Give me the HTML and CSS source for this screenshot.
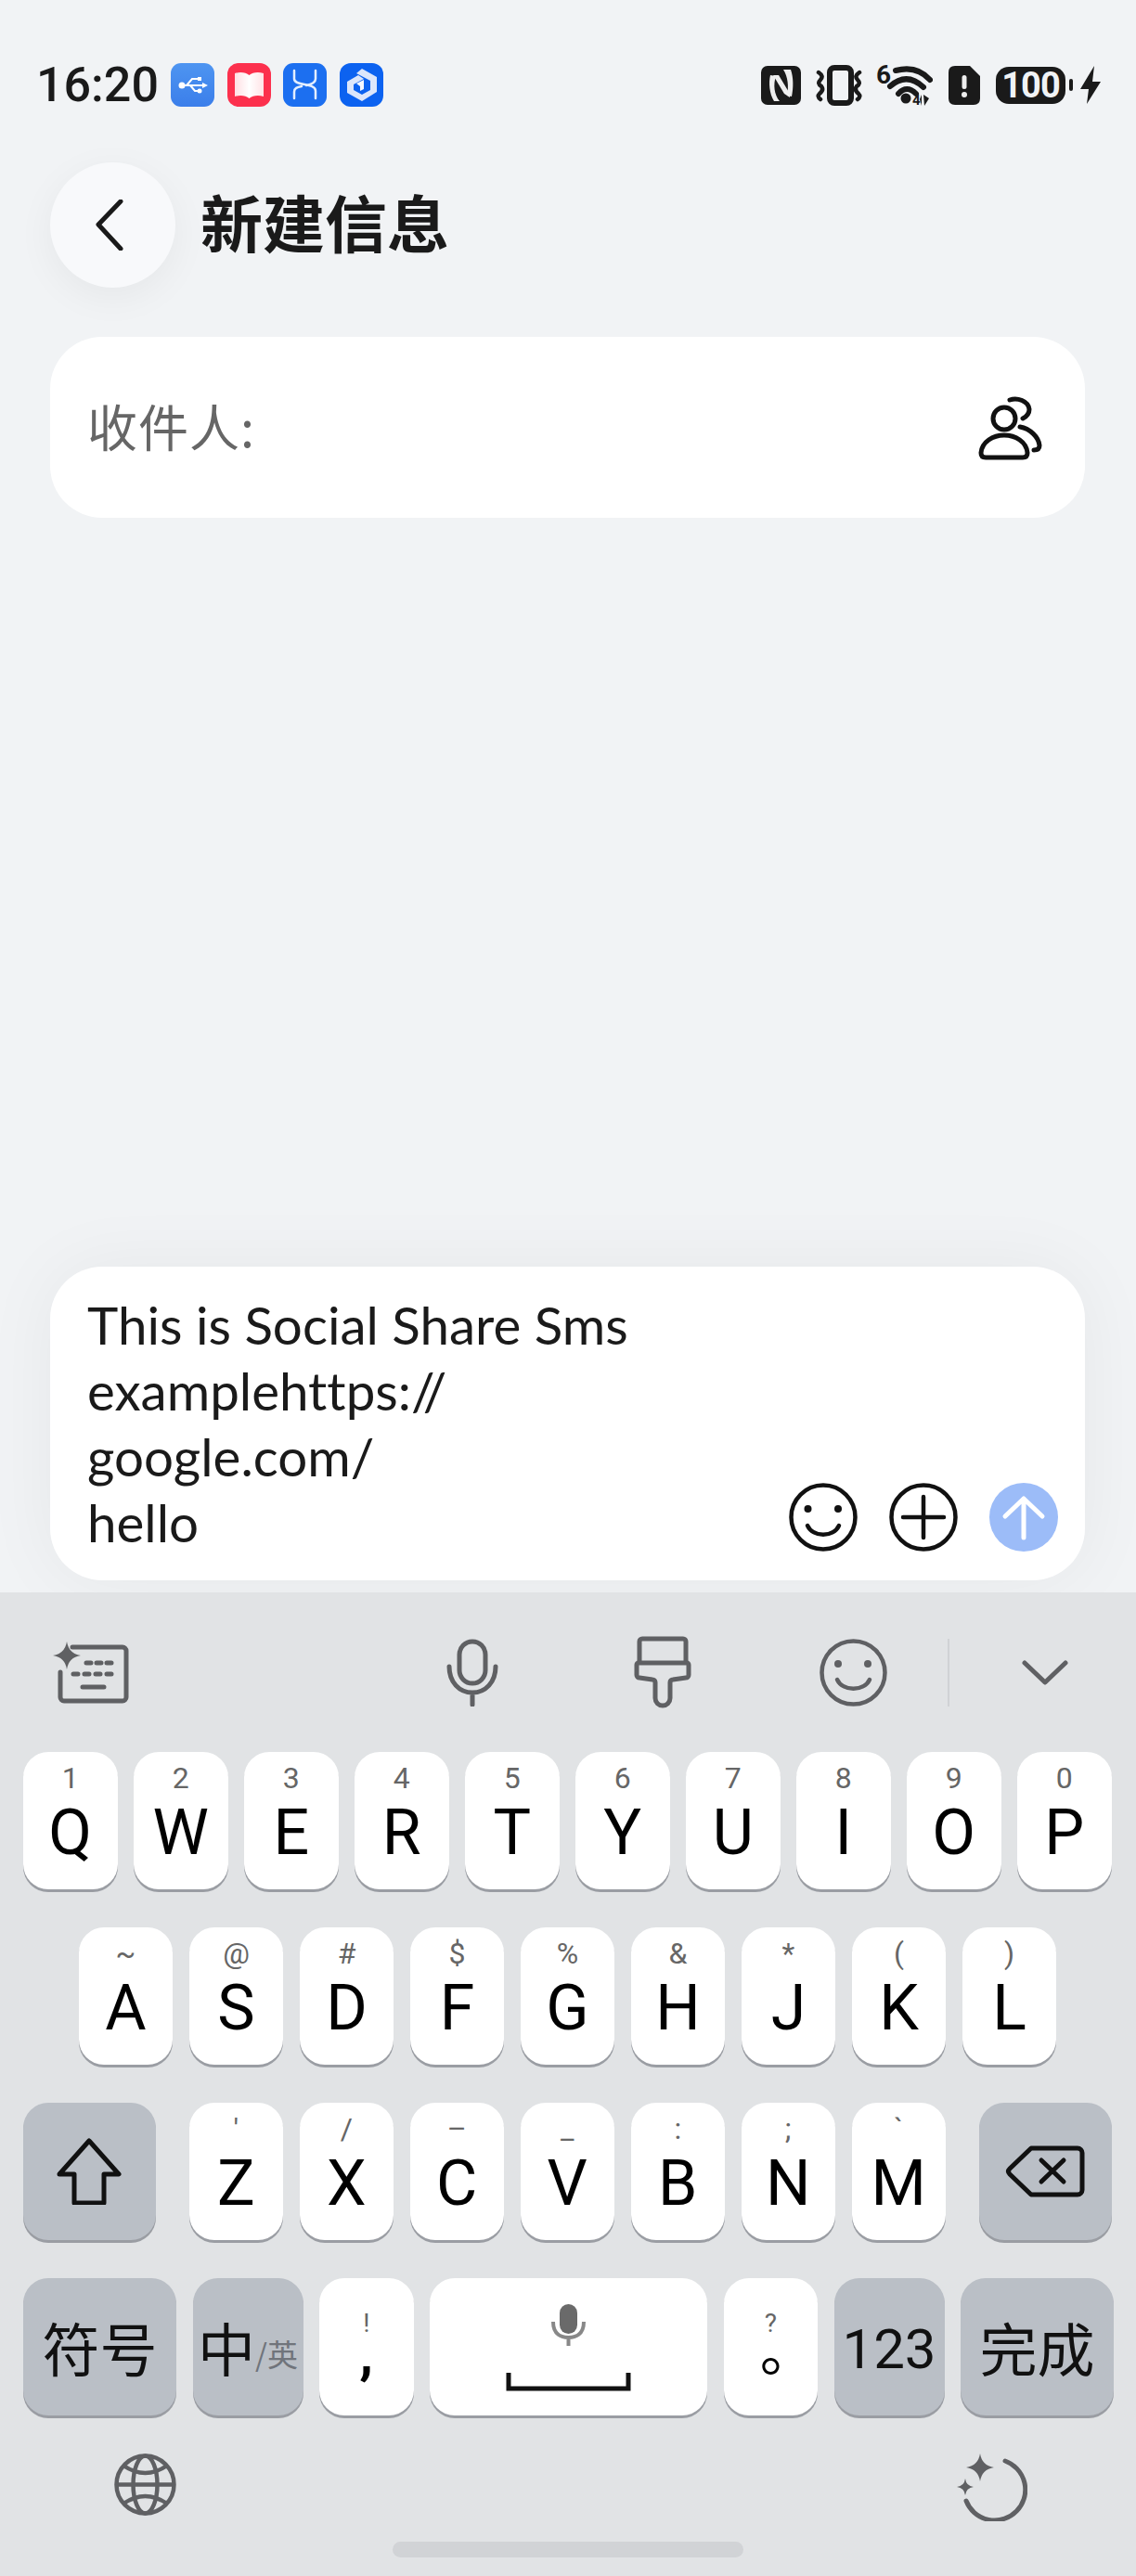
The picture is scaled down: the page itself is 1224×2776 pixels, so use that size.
FILE: index.html
```html
<!DOCTYPE html>
<html lang="zh-CN">
<head>
    <meta charset="UTF-8">
    <meta name="viewport" content="width=device-width, initial-scale=1.0">
    <title>新建信息</title>
    <link rel="stylesheet" href="styles.css">
</head>
<body>
<div class="phone">
    <div class="status-bar">
        <span class="time">16:20</span>
        <div class="app-icons">
            <svg class="app-icon" width="47" height="47" viewBox="0 0 47 47">
                <defs><linearGradient id="usb" x1="0" y1="0" x2="0" y2="1"><stop offset="0" stop-color="#4e95f1"/><stop offset="1" stop-color="#3b7eea"/></linearGradient></defs>
                <rect width="47" height="47" rx="11" fill="url(#usb)"/>
                <path d="M12 24H36M17 24L23 17H29M21 24L26 30H31" fill="none" stroke="#fff" stroke-width="2"/>
                <circle cx="12" cy="24" r="3.5" fill="#fff"/><rect x="29" y="15" width="4" height="4" fill="#fff"/><circle cx="31" cy="30" r="2.5" fill="#fff"/><path d="M34 21L40 24L34 27Z" fill="#fff"/>
            </svg>
            <svg class="app-icon" width="47" height="47" viewBox="0 0 47 47">
                <defs><linearGradient id="page" x1="0" y1="0" x2="1" y2="0"><stop offset="0" stop-color="#ffdfe3"/><stop offset=".5" stop-color="#fff"/><stop offset="1" stop-color="#ffe3e6"/></linearGradient></defs>
                <rect width="47" height="47" rx="12" fill="#fc304d"/>
                <path d="M8 11C14 9 20 10 23.500 13C27 10 33 9 39 11V36C33 34 27 35 23.500 38C20 35 14 34 8 36Z" fill="url(#page)"/>
            </svg>
            <svg class="app-icon" width="47" height="47" viewBox="0 0 47 47">
                <rect width="47" height="47" rx="11" fill="#1c6ff0"/>
                <path d="M12 8V17C12 25 35 21 35 30V38M35 8V17C35 21 30 23 25 24M20 25C15 26 12 27 12 31V38" fill="none" stroke="#e3eeff" stroke-width="2.500" stroke-linecap="round"/>
            </svg>
            <svg class="app-icon" width="47" height="47" viewBox="0 0 47 47">
                <rect width="47" height="47" rx="12" fill="#0c62f0"/>
                <path d="M24 6L40 15V31L24 41L8 32V20L20 13L26 17L15 23V29L24 34L33 29V19L18 11Z" fill="#dce6fb"/>
                <path d="M18 22L26 18V28L22 30V25Z" fill="#f4f7ff"/>
            </svg>
        </div>
        <div class="sys-icons">
            <svg class="nfc" width="43" height="42" viewBox="0 0 43 42">
                <rect width="43" height="42" rx="7" fill="#1a1a1a"/>
                <path d="M10 10L16 11C13 20 14 31 20 38L14 38C9 30 8 18 10 10Z" fill="#eee"/>
                <path d="M24 4L32 4C35 12 35 24 33 33L28 32C30 22 29 12 24 4Z" fill="#eee"/>
                <path d="M13 10L19 10L31 30L31 34L25 30Z" fill="#eee"/>
            </svg>
            <svg class="vibrate" width="50" height="44" viewBox="0 0 50 44">
                <rect x="15" y="3" width="23" height="38" rx="5" fill="none" stroke="#1a1a1a" stroke-width="6"/>
                <path d="M3 8Q9 12 5 16Q1 20 6 23Q9 27 4 31Q1 34 5 37M47 8Q41 12 45 16Q49 20 44 23Q41 27 46 31Q49 34 45 37" fill="none" stroke="#1a1a1a" stroke-width="4.500" stroke-linecap="round"/>
            </svg>
            <svg class="wifi" width="61" height="57" viewBox="0 -6 61 57">
                <text class="wifi-six" x="0" y="21">6</text>
                <path d="M21 7Q44 1 58 17M15 24Q33 8 51 25M24 32Q33 22 43 32" fill="none" stroke="#1a1a1a" stroke-width="6" stroke-linecap="round"/>
                <circle cx="32" cy="37" r="5.500" fill="#1a1a1a"/>
                <text class="wifi-four" x="39" y="44">4</text>
                <path d="M49 33V45L47 38ZM51 33L57 37L52 45Z" fill="#1a1a1a"/>
            </svg>
            <svg class="sim" width="34" height="42" viewBox="0 0 34 42">
                <path d="M7 0H23L34 11V35Q34 42 27 42H7Q0 42 0 35V7Q0 0 7 0Z" fill="#1a1a1a"/>
                <rect x="14.500" y="10" width="5" height="15" rx="2.500" fill="#eee"/>
                <circle cx="17" cy="31" r="3" fill="#eee"/>
            </svg>
            <div class="battery"><span class="battery-body">100</span><span class="battery-nub"></span></div>
            <svg class="bolt" width="22" height="41" viewBox="0 0 22 41">
                <path d="M15 0L13 17H22L7 41L9 25H0Z" fill="#1a1a1a"/>
            </svg>
        </div>
    </div>

    <div class="header">
        <div class="back-btn">
            <svg class="back-icon" width="30" height="55" viewBox="0 0 30 55"><path d="M27 2L3 27L27 53" fill="none" stroke="#1a1a1a" stroke-width="5" stroke-linecap="round" stroke-linejoin="round"/></svg>
        </div>
        <h1 class="title">新建信息</h1>
    </div>

    <div class="recipient">
        <span class="recipient-label">收件人:</span>
        <svg width="100" height="90" viewBox="0 0 100 90">
            <circle cx="42" cy="35" r="12" fill="none" stroke="#111" stroke-width="5"/>
            <path d="M17 72C18 60 30 53 42 53C54 53 66 60 67 72Q67 77 62 77H22Q17 77 17 72Z" fill="none" stroke="#111" stroke-width="5"/>
            <path d="M48 15C56 12 68 16 69 25C69 30 66 33 62 35M59 44C70 46 79 55 80 64C80 67 78 69 74 69" fill="none" stroke="#111" stroke-width="5" stroke-linecap="round"/>
        </svg>
    </div>

    <div class="composer">
        <div class="composer-text">This is Social Share Sms<br>examplehttps://<br>google.com/<br>hello</div>
        <div class="composer-btns">
            <svg width="74" height="74" viewBox="0 0 74 74">
                <circle cx="37" cy="37" r="34.500" fill="none" stroke="#111" stroke-width="4.500"/>
                <circle cx="20.500" cy="28" r="4" fill="#111"/><circle cx="53" cy="28" r="4" fill="#111"/>
                <path d="M20 46C26 59 48 59 54 46" fill="none" stroke="#111" stroke-width="4.500" stroke-linecap="round"/>
            </svg>
            <svg width="74" height="74" viewBox="0 0 74 74">
                <circle cx="37" cy="37" r="34.500" fill="none" stroke="#111" stroke-width="4.500"/>
                <path d="M15 37H59M37 15V59" fill="none" stroke="#111" stroke-width="4.500" stroke-linecap="round"/>
            </svg>
            <svg width="74" height="74" viewBox="0 0 74 74">
                <circle cx="37" cy="37" r="37" fill="#9cbcf8"/>
                <path d="M37 59V17M17 36L37 17L57 36" fill="none" stroke="#fff" stroke-width="5" stroke-linecap="round" stroke-linejoin="round"/>
            </svg>
        </div>
    </div>

    <div class="keyboard">
        <div class="toolbar">
            <svg class="tb-kbd" width="82" height="67" viewBox="0 0 82 67">
                <path d="M21 6H75A4 4 0 0 1 79 10V60A4 4 0 0 1 75 64H12A4 4 0 0 1 8 60V33" fill="none" stroke="#5f6063" stroke-width="5" stroke-linecap="round"/>
                <path d="M15 0Q17 13 30 15Q17 17 15 30Q13 17 0 15Q13 13 15 0Z" fill="#5f6063"/>
                <path d="M36 23H41M47 23H52M58 23H63M22 35H27M34 35H39M46 35H51M58 35H63M32 49H55" fill="none" stroke="#5f6063" stroke-width="5" stroke-linecap="round"/>
            </svg>
            <svg class="tb-mic" width="56" height="73" viewBox="0 0 56 73">
                <rect x="14" y="3" width="28" height="45" rx="14" fill="none" stroke="#5f6063" stroke-width="5"/>
                <path d="M3 30C3 47 14 58 28 58C42 58 53 47 53 30M28 58V71" fill="none" stroke="#5f6063" stroke-width="5" stroke-linecap="round"/>
            </svg>
            <svg class="tb-brush" width="62" height="78" viewBox="0 0 62 78">
                <path d="M6 29V6A3 3 0 0 1 9 3H53A3 3 0 0 1 56 6V29" fill="none" stroke="#5f6063" stroke-width="5"/>
                <path d="M5 29H57A2 2 0 0 1 59 31V42A3 3 0 0 1 56 45L42 47A3 3 0 0 0 39 50V67A8 8 0 0 1 23 67V50A3 3 0 0 0 20 47L6 45A3 3 0 0 1 3 42V31A2 2 0 0 1 5 29Z" fill="none" stroke="#5f6063" stroke-width="5" stroke-linejoin="round"/>
            </svg>
            <svg class="tb-smile" width="73" height="73" viewBox="0 0 73 73">
                <circle cx="36.500" cy="36.500" r="34" fill="none" stroke="#5f6063" stroke-width="4.500"/>
                <circle cx="20" cy="27" r="4" fill="#5f6063"/><circle cx="52" cy="27" r="4" fill="#5f6063"/>
                <path d="M19 44C25 57 48 57 54 44" fill="none" stroke="#5f6063" stroke-width="4.500" stroke-linecap="round"/>
            </svg>
            <span class="tb-divider"></span>
            <svg class="tb-chevron" width="50" height="27" viewBox="0 0 50 27">
                <path d="M3 3L25 24L47 3" fill="none" stroke="#5f6063" stroke-width="5" stroke-linecap="round" stroke-linejoin="round"/>
            </svg>
        </div>

        <div class="key-row">
            <div class="key"><span class="hint">1</span><span class="letter">Q</span></div>
            <div class="key"><span class="hint">2</span><span class="letter">W</span></div>
            <div class="key"><span class="hint">3</span><span class="letter">E</span></div>
            <div class="key"><span class="hint">4</span><span class="letter">R</span></div>
            <div class="key"><span class="hint">5</span><span class="letter">T</span></div>
            <div class="key"><span class="hint">6</span><span class="letter">Y</span></div>
            <div class="key"><span class="hint">7</span><span class="letter">U</span></div>
            <div class="key"><span class="hint">8</span><span class="letter">I</span></div>
            <div class="key"><span class="hint">9</span><span class="letter">O</span></div>
            <div class="key"><span class="hint">0</span><span class="letter">P</span></div>
        </div>
        <div class="key-row row-center">
            <div class="key"><span class="hint">~</span><span class="letter">A</span></div>
            <div class="key"><span class="hint">@</span><span class="letter">S</span></div>
            <div class="key"><span class="hint">#</span><span class="letter">D</span></div>
            <div class="key"><span class="hint">$</span><span class="letter">F</span></div>
            <div class="key"><span class="hint">%</span><span class="letter">G</span></div>
            <div class="key"><span class="hint">&amp;</span><span class="letter">H</span></div>
            <div class="key"><span class="hint">*</span><span class="letter">J</span></div>
            <div class="key"><span class="hint">(</span><span class="letter">K</span></div>
            <div class="key"><span class="hint">)</span><span class="letter">L</span></div>
        </div>
        <div class="key-row">
            <div class="key key-fn key-shift">
                <svg width="70" height="72" viewBox="0 0 70 72"><path d="M35 3L67 39H51V70H19V39H3Z" fill="none" stroke="#111" stroke-width="5" stroke-linejoin="round"/></svg>
            </div>
            <div class="key-group">
                <div class="key"><span class="hint">'</span><span class="letter">Z</span></div>
                <div class="key"><span class="hint">/</span><span class="letter">X</span></div>
                <div class="key"><span class="hint">–</span><span class="letter">C</span></div>
                <div class="key"><span class="hint">_</span><span class="letter">V</span></div>
                <div class="key"><span class="hint">:</span><span class="letter">B</span></div>
                <div class="key"><span class="hint">;</span><span class="letter">N</span></div>
                <div class="key"><span class="hint">`</span><span class="letter">M</span></div>
            </div>
            <div class="key key-fn key-shift">
                <svg width="86" height="56" viewBox="0 0 86 56">
                    <path d="M28 3H78A5 5 0 0 1 83 8V48A5 5 0 0 1 78 53H28L5 31Q2 28 5 25Z" fill="none" stroke="#111" stroke-width="5" stroke-linejoin="round"/>
                    <path d="M39 16L63 39M63 16L39 39" fill="none" stroke="#111" stroke-width="5" stroke-linecap="round"/>
                </svg>
            </div>
        </div>
        <div class="key-row">
            <div class="key key-fn key-sym"><span class="fn-label">符号</span></div>
            <div class="key key-fn key-lang"><span class="fn-label">中</span><span class="lang-alt">/英</span></div>
            <div class="key"><span class="hint hint-punct">!</span><span class="letter letter-punct">,</span></div>
            <div class="key key-space">
                <svg width="135" height="95" viewBox="0 0 135 95">
                    <rect x="58" y="1" width="19" height="32" rx="9.500" fill="#6a6a6a"/>
                    <path d="M51 20C51 34 60 37 67.500 37C75 37 84 34 84 20M67.500 37V46" fill="none" stroke="#888" stroke-width="4"/>
                    <path d="M3 75V92H132V75" fill="none" stroke="#111" stroke-width="5"/>
                </svg>
            </div>
            <div class="key"><span class="hint hint-punct">?</span><span class="letter letter-circle">。</span></div>
            <div class="key key-fn key-num"><span class="num-label">123</span></div>
            <div class="key key-fn key-done"><span class="fn-label">完成</span></div>
        </div>

        <div class="kb-bottom">
            <svg width="67" height="67" viewBox="0 0 67 67">
                <g fill="none" stroke="#5f6063" stroke-width="4.500">
                    <circle cx="33.500" cy="33.500" r="31"/>
                    <ellipse cx="33.500" cy="33.500" rx="13" ry="31"/>
                    <path d="M2 33.500H65M10 13Q33.500 29 57 13M10 54Q33.500 38 57 54"/>
                </g>
            </svg>
            <svg width="76" height="73" viewBox="0 0 76 73">
                <path d="M52 8A33 33 0 1 1 10 51" fill="none" stroke="#5f6063" stroke-width="5" stroke-linecap="round"/>
                <path d="M25 0Q27 13 40 15Q27 17 25 30Q23 17 10 15Q23 13 25 0Z" fill="#5f6063"/>
                <path d="M9 27Q10 35 18 36Q10 37 9 45Q8 37 0 36Q8 35 9 27Z" fill="#5f6063"/>
            </svg>
        </div>
        <div class="home-bar"></div>
    </div>
</div>
</body>
</html>
```

FILE: styles.css
```css
* {
    box-sizing: border-box;
}
body {
    margin: 0;
    background: #f1f3f5;
    font-family: 'Roboto', 'Noto Sans CJK SC', sans-serif;
    color: #1a1a1a;
}
.phone {
    width: 1224px;
    height: 2776px;
    display: flex;
    flex-direction: column;
    overflow: hidden;
}

/* status bar */
.status-bar {
    display: flex;
    align-items: center;
    height: 47px;
    margin-top: 68px;
    padding: 0 38px 0 39px;
}
.time {
    font-size: 52px;
    font-weight: 500;
    width: 145px;
}
.app-icons {
    display: flex;
    gap: 13.500px;
}
.sys-icons {
    display: flex;
    align-items: center;
    margin-left: auto;
}
.wifi-six {
    font: 700 28px 'Roboto', sans-serif;
    fill: #1a1a1a;
}
.wifi-four {
    font: 700 15px 'Roboto', sans-serif;
    fill: #1a1a1a;
}
.vibrate { margin-left: 16px; }
.wifi { margin: -6px 0 -6px 15px; }
.sim { margin-left: 17px; }
.battery {
    display: flex;
    align-items: center;
    margin-left: 17px;
}
.battery-body {
    width: 75px;
    height: 40px;
    border-radius: 14px;
    background: #1a1a1a;
    color: #f1f3f5;
    font-size: 38px;
    font-weight: 700;
    line-height: 40px;
    letter-spacing: -1px;
    text-align: center;
}
.battery-nub {
    width: 4px;
    height: 13px;
    margin-left: 4px;
    border-radius: 2px;
    background: #1a1a1a;
}
.bolt { margin-left: 8px; }

/* header */
.header {
    display: flex;
    align-items: center;
    gap: 27px;
    margin: 60px 0 0 54px;
    position: relative;
    z-index: 1;
}
.back-btn {
    width: 135px;
    height: 135px;
    border-radius: 50%;
    background: #f8f9fb;
    box-shadow: 0 10px 40px rgba(0, 0, 0, 0.05);
    display: flex;
    align-items: center;
    justify-content: center;
}
.back-icon {
    margin-right: 7px;
}
.title {
    margin: 0 0 10px;
    font-family: 'Noto Sans CJK SC', sans-serif;
    font-size: 67px;
    font-weight: 700;
    line-height: 1;
}

/* recipient */
.recipient {
    height: 195px;
    margin: 53px 55px 0 54px;
    padding: 0 29px 0 40px;
    border-radius: 56px;
    background: #fff;
    display: flex;
    align-items: center;
    justify-content: space-between;
}
.recipient-label {
    margin-bottom: 4px;
    font-family: 'Noto Sans CJK SC', sans-serif;
    font-size: 54px;
    font-weight: 400;
    letter-spacing: 1px;
    color: #666;
}

/* message box */
.composer {
    height: 338px;
    margin: auto 55px 13px 54px;
    padding: 0 29px 31px 40px;
    border-radius: 56px;
    background: #fff;
    box-shadow: 0 0 80px rgba(0, 0, 0, 0.05);
    display: flex;
    justify-content: space-between;
    align-items: flex-end;
}
.composer-text {
    align-self: flex-start;
    margin-top: 27px;
    font-family: 'Lato', sans-serif;
    font-size: 56.500px;
    font-variant-ligatures: none;
    line-height: 71px;
    color: #1a1a1a;
}
.composer-btns {
    display: flex;
    gap: 34px;
}
.composer-btns svg {
    display: block;
}

/* keyboard */
.keyboard {
    height: 1060px;
    background: #e1e3e5;
    padding: 0 26px 0 25px;
    position: relative;
}
.toolbar {
    height: 172px;
    display: flex;
    align-items: center;
}
.tb-kbd { margin-left: 32px; }
.tb-mic { margin-left: 342px; }
.tb-brush { margin-left: 146px; }
.tb-smile { margin-left: 138px; }
.tb-divider {
    width: 2px;
    height: 73px;
    margin-left: 65px;
    background: #d0d2d5;
}
.tb-chevron { margin-left: 78px; }

.key-row {
    display: flex;
    gap: 17.500px;
    margin-bottom: 41px;
}
.row-center {
    justify-content: center;
}
.key-group {
    display: flex;
    gap: 17.500px;
    margin: 0 18.500px;
}
.key {
    width: 101.500px;
    height: 148px;
    border-radius: 27px;
    background: #fff;
    box-shadow: 0 3px 0 #9a9da3;
    display: flex;
    flex-direction: column;
    align-items: center;
    flex-shrink: 0;
}
.hint {
    height: 34px;
    margin-top: 11px;
    font-size: 32px;
    line-height: 34px;
    color: #666;
}
.letter {
    margin-top: 8px;
    font-size: 68px;
    line-height: 68px;
    color: #000;
}
.key-fn {
    background: #babfc6;
    flex-direction: row;
    justify-content: center;
}
.key-shift { width: 142.500px; }
.key-sym, .key-done { width: 165px; }
.key-lang, .key-num { width: 119px; }
.key-space {
    width: 299px;
    justify-content: center;
}
.fn-label {
    font-family: 'Noto Sans CJK SC', sans-serif;
    font-size: 62px;
    color: #111;
}
.lang-alt {
    font-family: 'Noto Sans CJK SC', sans-serif;
    font-size: 33px;
    color: #70747b;
    margin-top: 14px;
}
.num-label {
    margin-top: 5px;
    font-size: 60px;
    color: #111;
}
.hint-punct {
    height: 26px;
    margin-top: 36px;
    font-size: 28px;
    line-height: 26px;
}
.letter-punct {
    margin-top: 0;
    font-weight: 700;
    font-size: 60px;
    line-height: 40px;
}
.letter-circle {
    margin-top: 0;
    font-family: 'Noto Sans CJK TC', sans-serif;
    font-size: 60px;
    line-height: 60px;
}
.kb-bottom {
    display: flex;
    justify-content: space-between;
    padding: 0 91px 0 98px;
    margin-top: 8px;
}
.home-bar {
    position: absolute;
    left: 423px;
    bottom: 20px;
    width: 378px;
    height: 17px;
    border-radius: 9px;
    background: #d1d3d6;
}
```
